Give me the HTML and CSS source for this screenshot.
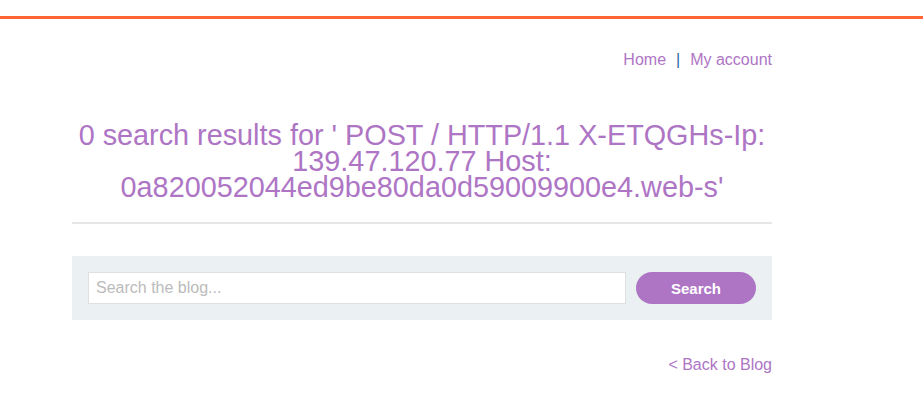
FILE: index.html
```html
<!DOCTYPE html>
<html>
<head>
<meta charset="utf-8">
<link rel="stylesheet" href="styles.css">
</head>
<body>
<div class="topbar"></div>
<div class="container">
  <nav class="nav">
    <a href="#" class="link">Home</a><span class="sep">|</span><a href="#" class="link">My account</a>
  </nav>
  <h1 class="title">0 search results for ' POST / HTTP/1.1 X-ETQGHs-Ip: 139.47.120.77 Host: 0a820052044ed9be80da0d59009900e4.web-s'</h1>
  <hr class="rule">
  <form class="search">
    <input class="search-input" type="text" placeholder="Search the blog...">
    <button class="search-btn" type="button">Search</button>
  </form>
  <div class="back"><a href="#" class="link">&lt; Back to Blog</a></div>
</div>
</body>
</html>
```
FILE: styles.css
```css
html, body {
  margin: 0;
  padding: 0;
  background: #fff;
  font-family: "Liberation Sans", Arial, sans-serif;
}
.topbar {
  height: 3px;
  margin-top: 16px;
  background: #ff6633;
}
.container {
  width: 700px;
  margin-left: 72px;
}
.nav {
  display: flex;
  justify-content: flex-end;
  align-items: center;
  margin-top: 31px;
  font-size: 16px;
  line-height: 20px;
}
.link {
  color: #ae75c5;
  text-decoration: none;
}
.sep {
  color: #2b6aa3;
  margin: 0 10px;
}
.title {
  margin: 52px 0 0;
  text-align: center;
  font-weight: normal;
  font-size: 28.8px;
  line-height: 26px;
  color: #ae75c5;
}
.rule {
  border: 0;
  height: 2px;
  background: #e6e6e6;
  margin: 22px 0 0;
}
.search {
  display: flex;
  gap: 10px;
  align-items: center;
  background: #ebf0f2;
  margin: 32px 0 0;
  padding: 16px;
  height: 32px;
}
.search-input {
  flex: 1;
  height: 32px;
  box-sizing: border-box;
  border: 1px solid #e0e0e0;
  padding: 0 7px;
  font-family: "Liberation Sans", Arial, sans-serif;
  font-size: 16px;
  color: #333;
  outline: none;
}
.search-input::placeholder {
  color: #bbb;
}
.search-btn {
  width: 120px;
  height: 32px;
  border: 0;
  border-radius: 16px;
  background: #ae75c5;
  color: #fff;
  font-family: "Liberation Sans", Arial, sans-serif;
  font-weight: bold;
  font-size: 15px;
}
.back {
  text-align: right;
  margin-top: 35px;
  font-size: 16px;
  line-height: 20px;
}
```
